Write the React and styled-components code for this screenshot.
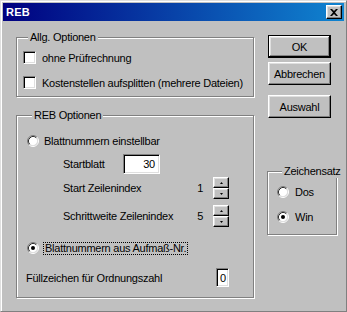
import React from 'react';
import styled, { createGlobalStyle, css } from 'styled-components';

const Global = createGlobalStyle`
  html, body { margin: 0; padding: 0; background: #c0c0c0; }
  #root { width: 347px; height: 312px; }
  * { box-sizing: border-box; }
`;

const Window = styled.div`
  width: 347px;
  height: 312px;
  background: #c0c0c0;
  border-style: solid;
  border-width: 1px;
  border-color: #dfdfdf #808080 #808080 #dfdfdf;
  box-shadow: inset 1px 1px 0 #fff;
  padding: 2px;
  display: flex;
  flex-direction: column;
  font-family: "Liberation Sans", Arial, sans-serif;
  font-size: 11px;
  letter-spacing: -0.25px;
  color: #000;
`;

const TitleBar = styled.div`
  height: 18px;
  flex: none;
  display: flex;
  align-items: center;
  justify-content: space-between;
  padding: 0 2px 0 3px;
  background: linear-gradient(to right, #000080, #1084d0);
`;

const Title = styled.span`
  color: #fff;
  font-weight: bold;
  font-size: 11px;
  letter-spacing: 0.2px;
`;

const CloseBtn = styled.div`
  width: 16px;
  height: 14px;
  background: #c0c0c0;
  border: 1px solid;
  border-color: #fff #000 #000 #fff;
  box-shadow: inset -1px -1px 0 #808080, inset 1px 1px 0 #dfdfdf;
  display: flex;
  align-items: center;
  justify-content: center;
`;

const Body = styled.div`
  display: flex;
  gap: 13px;
  padding: 10px 0 0 13px;
`;

const Column = styled.div`
  display: flex;
  flex-direction: column;
  width: ${p => p.$w}px;
  padding-top: ${p => p.$pt || 0}px;
`;

const Group = styled.fieldset`
  margin: ${p => p.$mt || 0}px 0 0 0;
  padding: ${p => p.$pad};
  min-width: 0;
  width: ${p => p.$w}px;
  border: 1px solid #808080;
  box-shadow: 1px 1px 0 #fff, inset 1px 1px 0 #fff;
  display: flex;
  flex-direction: column;
`;

const Legend = styled.legend`
  margin-left: 5px;
  padding: 0 2px;
  height: 13px;
  line-height: 13px;
  background: #c0c0c0;
`;

const Row = styled.div`
  display: flex;
  align-items: center;
  height: ${p => p.$h}px;
  margin-top: ${p => p.$mt || 0}px;
  margin-left: ${p => p.$ml || 0}px;
  gap: ${p => p.$gap || 0}px;
  white-space: nowrap;
`;

const CheckBox = styled.span`
  width: 13px;
  height: 13px;
  flex: none;
  background: #fff;
  border: 1px solid;
  border-color: #808080 #fff #fff #808080;
  box-shadow: inset 1px 1px 0 #000, inset -1px -1px 0 #dfdfdf;
`;

const Focus = styled.span`
  border: 1px dotted #000;
  line-height: 11px;
  padding: 0 1px;
`;

const Label = styled.span`
  width: ${p => (p.$w ? `${p.$w}px` : 'auto')};
  flex: none;
`;

const Value = styled.span`
  width: ${p => p.$w}px;
  text-align: right;
  flex: none;
`;

const Edit = styled.div`
  width: ${p => p.$w}px;
  height: ${p => p.$h}px;
  background: #fff;
  border: 1px solid;
  border-color: #808080 #fff #fff #808080;
  box-shadow: inset 1px 1px 0 #000, inset -1px -1px 0 #dfdfdf;
  display: flex;
  align-items: center;
  justify-content: ${p => (p.$right ? 'flex-end' : 'flex-start')};
  padding: ${p => (p.$right ? '0 4px 0 0' : '0 0 0 3px')};
`;

const Spin = styled.div`
  display: flex;
  flex-direction: column;
  width: 16px;
  flex: none;
`;

const SpinBtn = styled.div`
  height: 11px;
  background: #c0c0c0;
  border: 1px solid;
  border-color: #fff #000 #000 #fff;
  box-shadow: inset -1px -1px 0 #808080, inset 1px 1px 0 #dfdfdf;
  display: flex;
  align-items: center;
  justify-content: center;
`;

const Btn = styled.button`
  width: 63px;
  height: 23px;
  margin: ${p => p.$mt || 0}px 0 0 1px;
  padding: 0;
  background: #c0c0c0;
  font: inherit;
  letter-spacing: inherit;
  color: #000;
  border: 1px solid;
  border-color: #fff #000 #000 #fff;
  box-shadow: inset -1px -1px 0 #808080, inset 1px 1px 0 #dfdfdf;
  ${p =>
    p.$default &&
    css`
      border-color: #000;
      box-shadow: inset -1px -1px 0 #000, inset 1px 1px 0 #fff, inset -2px -2px 0 #808080,
        inset 2px 2px 0 #dfdfdf;
    `}
`;

function Radio({ checked }) {
  return (
    <svg width="12" height="12" viewBox="0 0 12 12" style={{ flex: 'none' }}>
      <circle cx="6" cy="6" r="4.5" fill="#fff" />
      <path d="M2.11 9.89 A5.5 5.5 0 0 1 9.89 2.11" fill="none" stroke="#808080" strokeWidth="1" />
      <path d="M2.82 9.18 A4.5 4.5 0 0 1 9.18 2.82" fill="none" stroke="#303030" strokeWidth="1" />
      <path d="M9.89 2.11 A5.5 5.5 0 0 1 2.11 9.89" fill="none" stroke="#fff" strokeWidth="1" />
      <path d="M9.18 2.82 A4.5 4.5 0 0 1 2.82 9.18" fill="none" stroke="#dfdfdf" strokeWidth="1" />
      {checked && <circle cx="6" cy="6" r="2" fill="#000" />}
    </svg>
  );
}

function Arrow({ down }) {
  return (
    <svg width="3" height="2" viewBox="0 0 3 2">
      <polygon points={down ? '0,0 3,0 1.5,2' : '0,2 3,2 1.5,0'} fill="#000" />
    </svg>
  );
}

function Spinner() {
  return (
    <Spin>
      <SpinBtn>
        <Arrow />
      </SpinBtn>
      <SpinBtn>
        <Arrow down />
      </SpinBtn>
    </Spin>
  );
}

export default function App() {
  return (
    <>
      <Global />
      <Window>
        <TitleBar>
          <Title>REB</Title>
          <CloseBtn>
            <svg width="8" height="7" viewBox="0 0 8 7">
              <path d="M0 0h2l2 2 2-2h2L5 3.5 8 7H6L4 5 2 7H0l3-3.5z" fill="#000" />
            </svg>
          </CloseBtn>
        </TitleBar>
        <Body>
          <Column $w={238}>
            <Group $w={238} $pad="7px 0 7px 6px">
              <Legend>Allg. Optionen</Legend>
              <Row $h={13} $gap={6}>
                <CheckBox />
                <span>ohne Prüfrechnung</span>
              </Row>
              <Row $h={13} $gap={6} $mt={12}>
                <CheckBox />
                <span>Kostenstellen aufsplitten (mehrere Dateien)</span>
              </Row>
            </Group>
            <Group $w={238} $mt={12} $pad="13px 0 10px 10px">
              <Legend>REB Optionen</Legend>
              <Row $h={12} $gap={5}>
                <Radio />
                <span>Blattnummern einstellbar</span>
              </Row>
              <Row $h={20} $mt={7} $ml={36}>
                <Label $w={60}>Startblatt</Label>
                <Edit $w={37} $h={20} $right>30</Edit>
              </Row>
              <Row $h={22} $mt={3} $ml={36}>
                <Label $w={130}>Start Zeilenindex</Label>
                <Value $w={10}>1</Value>
                <Label $w={10} />
                <Spinner />
              </Row>
              <Row $h={22} $mt={6} $ml={36}>
                <Label $w={130}>Schrittweite Zeilenindex</Label>
                <Value $w={10}>5</Value>
                <Label $w={10} />
                <Spinner />
              </Row>
              <Row $h={12} $mt={15} $gap={4}>
                <Radio checked />
                <Focus>Blattnummern aus Aufmaß-Nr.</Focus>
              </Row>
              <Row $h={19} $mt={14} $ml={-1}>
                <Label $w={190}>Füllzeichen für Ordnungszahl</Label>
                <Edit $w={13} $h={19}>0</Edit>
              </Row>
            </Group>
          </Column>
          <Column $w={70} $pt={4}>
            <Btn $default>OK</Btn>
            <Btn $mt={4}>Abbrechen</Btn>
            <Btn $mt={10}>Auswahl</Btn>
            <Group $w={70} $mt={47} $pad="8px 0 11px 9px">
              <Legend>Zeichensatz</Legend>
              <Row $h={12} $gap={6}>
                <Radio />
                <span>Dos</span>
              </Row>
              <Row $h={12} $gap={6} $mt={13}>
                <Radio checked />
                <span>Win</span>
              </Row>
            </Group>
          </Column>
        </Body>
      </Window>
    </>
  );
}
